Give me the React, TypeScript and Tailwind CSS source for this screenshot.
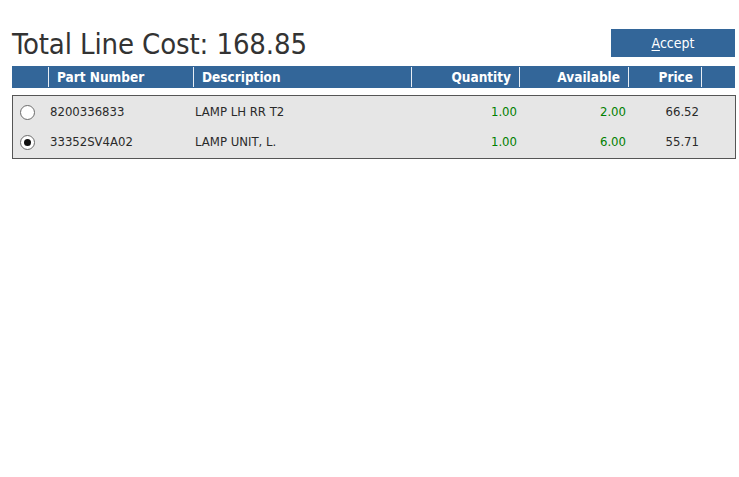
import React from 'react';

const font = { fontFamily: '"DejaVu Sans Condensed", "DejaVu Sans", Tahoma, sans-serif' };

const rows = [
  { part: '8200336833', desc: 'LAMP LH RR T2', qty: '1.00', avail: '2.00', price: '66.52', selected: false },
  { part: '33352SV4A02', desc: 'LAMP UNIT, L.', qty: '1.00', avail: '6.00', price: '55.71', selected: true },
];

const cols = 'grid grid-cols-[36px_145px_218px_108px_109px_73px_1fr]';

function Radio({ checked }: { checked: boolean }) {
  return (
    <span className="flex h-[15px] w-[15px] items-center justify-center rounded-full border border-[#6b6b6b] bg-white">
      {checked && <span className="h-[7px] w-[7px] rounded-full bg-[#111]" />}
    </span>
  );
}

export default function App() {
  return (
    <div className="min-h-[477px] w-[739px] bg-white pl-3 pt-7" style={font}>
      <div className="flex w-[724px] items-end justify-between">
        <h1 className="text-[29px] leading-[32px] tracking-[-0.12px] text-[#333] -mb-[3px]">Total Line Cost: 168.85</h1>
        <button className="mr-[1px] h-7 w-[124px] bg-[#336699] text-[14px] text-white">
          <span className="underline underline-offset-2">A</span>ccept
        </button>
      </div>

      <div className={`${cols} mt-[9px] h-[22px] w-[723px] bg-[#336699] text-[13.5px] font-bold text-white`}>
        <div />
        <div className="flex items-center border-l border-[#e8eef5] my-[1px] pl-2">Part Number</div>
        <div className="flex items-center border-l border-[#e8eef5] my-[1px] pl-2">Description</div>
        <div className="flex items-center justify-end border-l border-[#e8eef5] my-[1px] pr-2">Quantity</div>
        <div className="flex items-center justify-end border-l border-[#e8eef5] my-[1px] pr-2">Available</div>
        <div className="flex items-center justify-end border-l border-[#e8eef5] my-[1px] pr-2">Price</div>
        <div className="border-l border-[#e8eef5] my-[1px]" />
      </div>

      <div className="mt-[7px] w-[724px] border border-[#555] bg-[#e6e6e6] py-[1px] text-[13px] text-[#2a2a2a]">
        {rows.map((r) => (
          <div key={r.part} className={`${cols} -ml-[1px] h-[30px] items-center`}>
            <div className="flex pl-[8px]">
              <Radio checked={r.selected} />
            </div>
            <div className="pl-[2px]">{r.part}</div>
            <div className="pl-[2px]">{r.desc}</div>
            <div className="pr-[2px] text-right text-[#008000]">{r.qty}</div>
            <div className="pr-[2px] text-right text-[#008000]">{r.avail}</div>
            <div className="pr-[2px] text-right">{r.price}</div>
            <div />
          </div>
        ))}
      </div>
    </div>
  );
}
